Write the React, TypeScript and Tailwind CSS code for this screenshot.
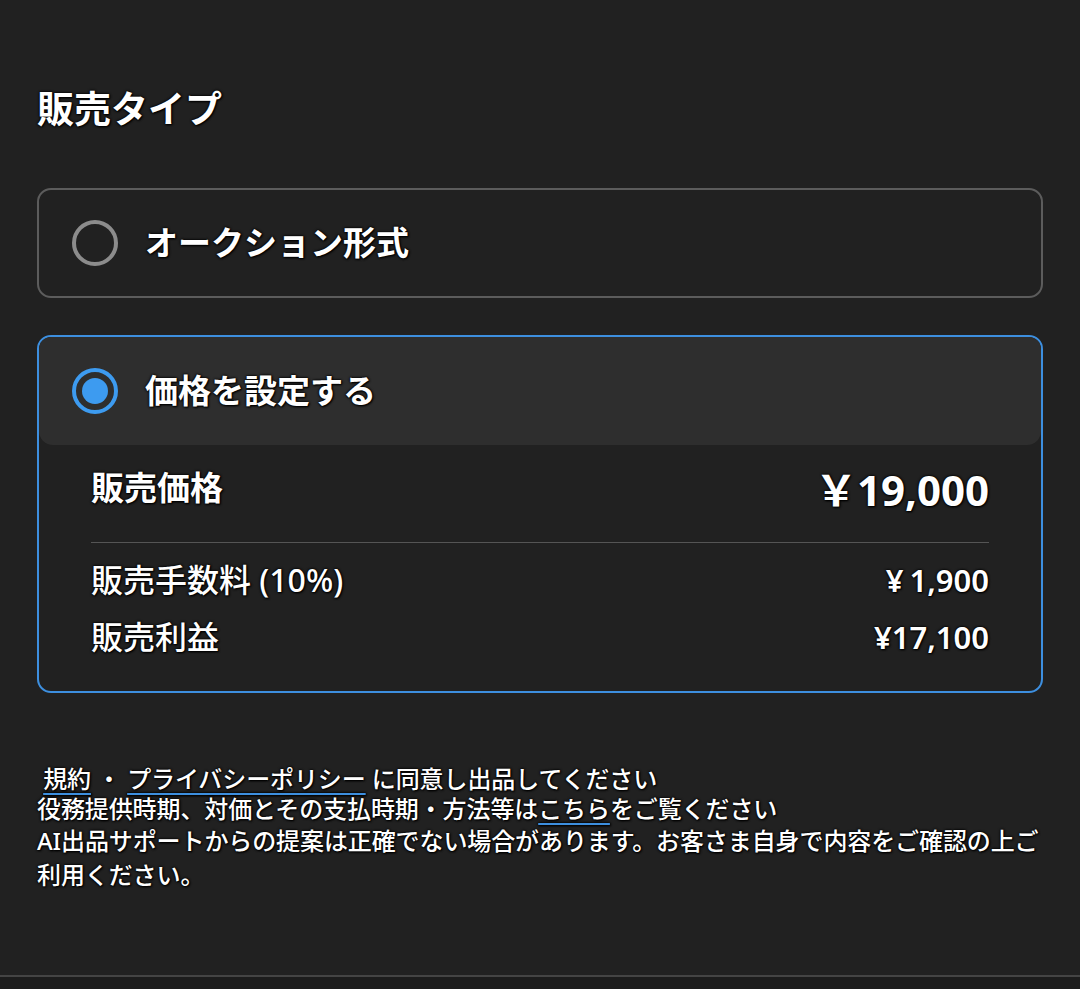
import React from 'react';

const shadow = '[text-shadow:0_0_2px_#000,0_0_3px_#000,1px_1px_2px_#000]';
const link = 'underline decoration-[#3d8fdf] decoration-2 underline-offset-[5px]';

export default function App() {
  return (
    <div
      className="w-[1080px] h-[989px] bg-[#212121] text-white flex flex-col"
      style={{ fontFamily: '"Noto Sans", "Noto Sans CJK JP", sans-serif' }}
    >
      <div className="flex-1 px-[37px] pt-[85px]">
        <h2 className={`text-[37px] font-bold leading-[48px] ${shadow}`}>販売タイプ</h2>

        {/* Auction option */}
        <div className="mt-[55px] h-[110px] rounded-[14px] border-2 border-[#5c5c5c] flex items-center pl-[33px]">
          <span className="w-[46px] h-[46px] rounded-full border-[4px] border-[#8c8c8c]" />
          <span className={`ml-[27px] text-[33px] font-bold ${shadow}`}>オークション形式</span>
        </div>

        {/* Fixed price option */}
        <div className="mt-[37px] rounded-[14px] border-2 border-[#3d8fdf] overflow-hidden">
          <div className="h-[108px] bg-[#2e2e2e] rounded-b-[14px] flex items-center pl-[33px]">
            <span className="w-[46px] h-[46px] rounded-full border-[4px] border-[#3d9bf0] flex items-center justify-center">
              <span className="w-[26px] h-[26px] rounded-full bg-[#3d9bf0]" />
            </span>
            <span className={`ml-[27px] text-[33px] font-bold ${shadow}`}>価格を設定する</span>
          </div>
          <div className="px-[52px] pb-[28px]">
            <div className="flex items-center justify-between h-[86px] mb-[11px]">
              <span className={`text-[33px] font-bold ${shadow}`}>販売価格</span>
              <span className={`text-[42px] font-bold ${shadow}`}>
                <span style={{ fontFamily: '"Noto Sans CJK JP", sans-serif' }}>￥</span>19,000
              </span>
            </div>
            <div className="h-px bg-[#555]" />
            <div className="flex items-center justify-between h-[62px] mt-[6px]">
              <span className={`text-[32px] font-medium ${shadow}`}>販売手数料 (10%)</span>
              <span className={`text-[31px] font-semibold ${shadow}`}>
                <span className="mr-[6px]">¥</span>1,900
              </span>
            </div>
            <div className="flex items-center justify-between h-[52px]">
              <span className={`text-[32px] font-medium ${shadow}`}>販売利益</span>
              <span className={`text-[31px] font-semibold ${shadow}`}>¥17,100</span>
            </div>
          </div>
        </div>

        {/* Notes */}
        <div className={`mt-[71px] text-[24px] tracking-[-0.1px] leading-[30px] font-medium ${shadow}`}>
          <p>
            {'\u00a0'}
            <span className={link}>規約</span>
            {' ・ '}
            <span className={link}>プライバシーポリシー</span>
            {' に同意し出品してください'}
          </p>
          <p>
            役務提供時期、対価とその支払時期・方法等は
            <span className={link}>こちら</span>
            をご覧ください
          </p>
          <p className="leading-[34px]">
            AI出品サポートからの提案は正確でない場合があります。お客さま自身で内容をご確認の上ご利用ください。
          </p>
        </div>
      </div>
      <div className="h-[14px] border-t-2 border-[#444] bg-[#1c1c1c]" />
    </div>
  );
}
